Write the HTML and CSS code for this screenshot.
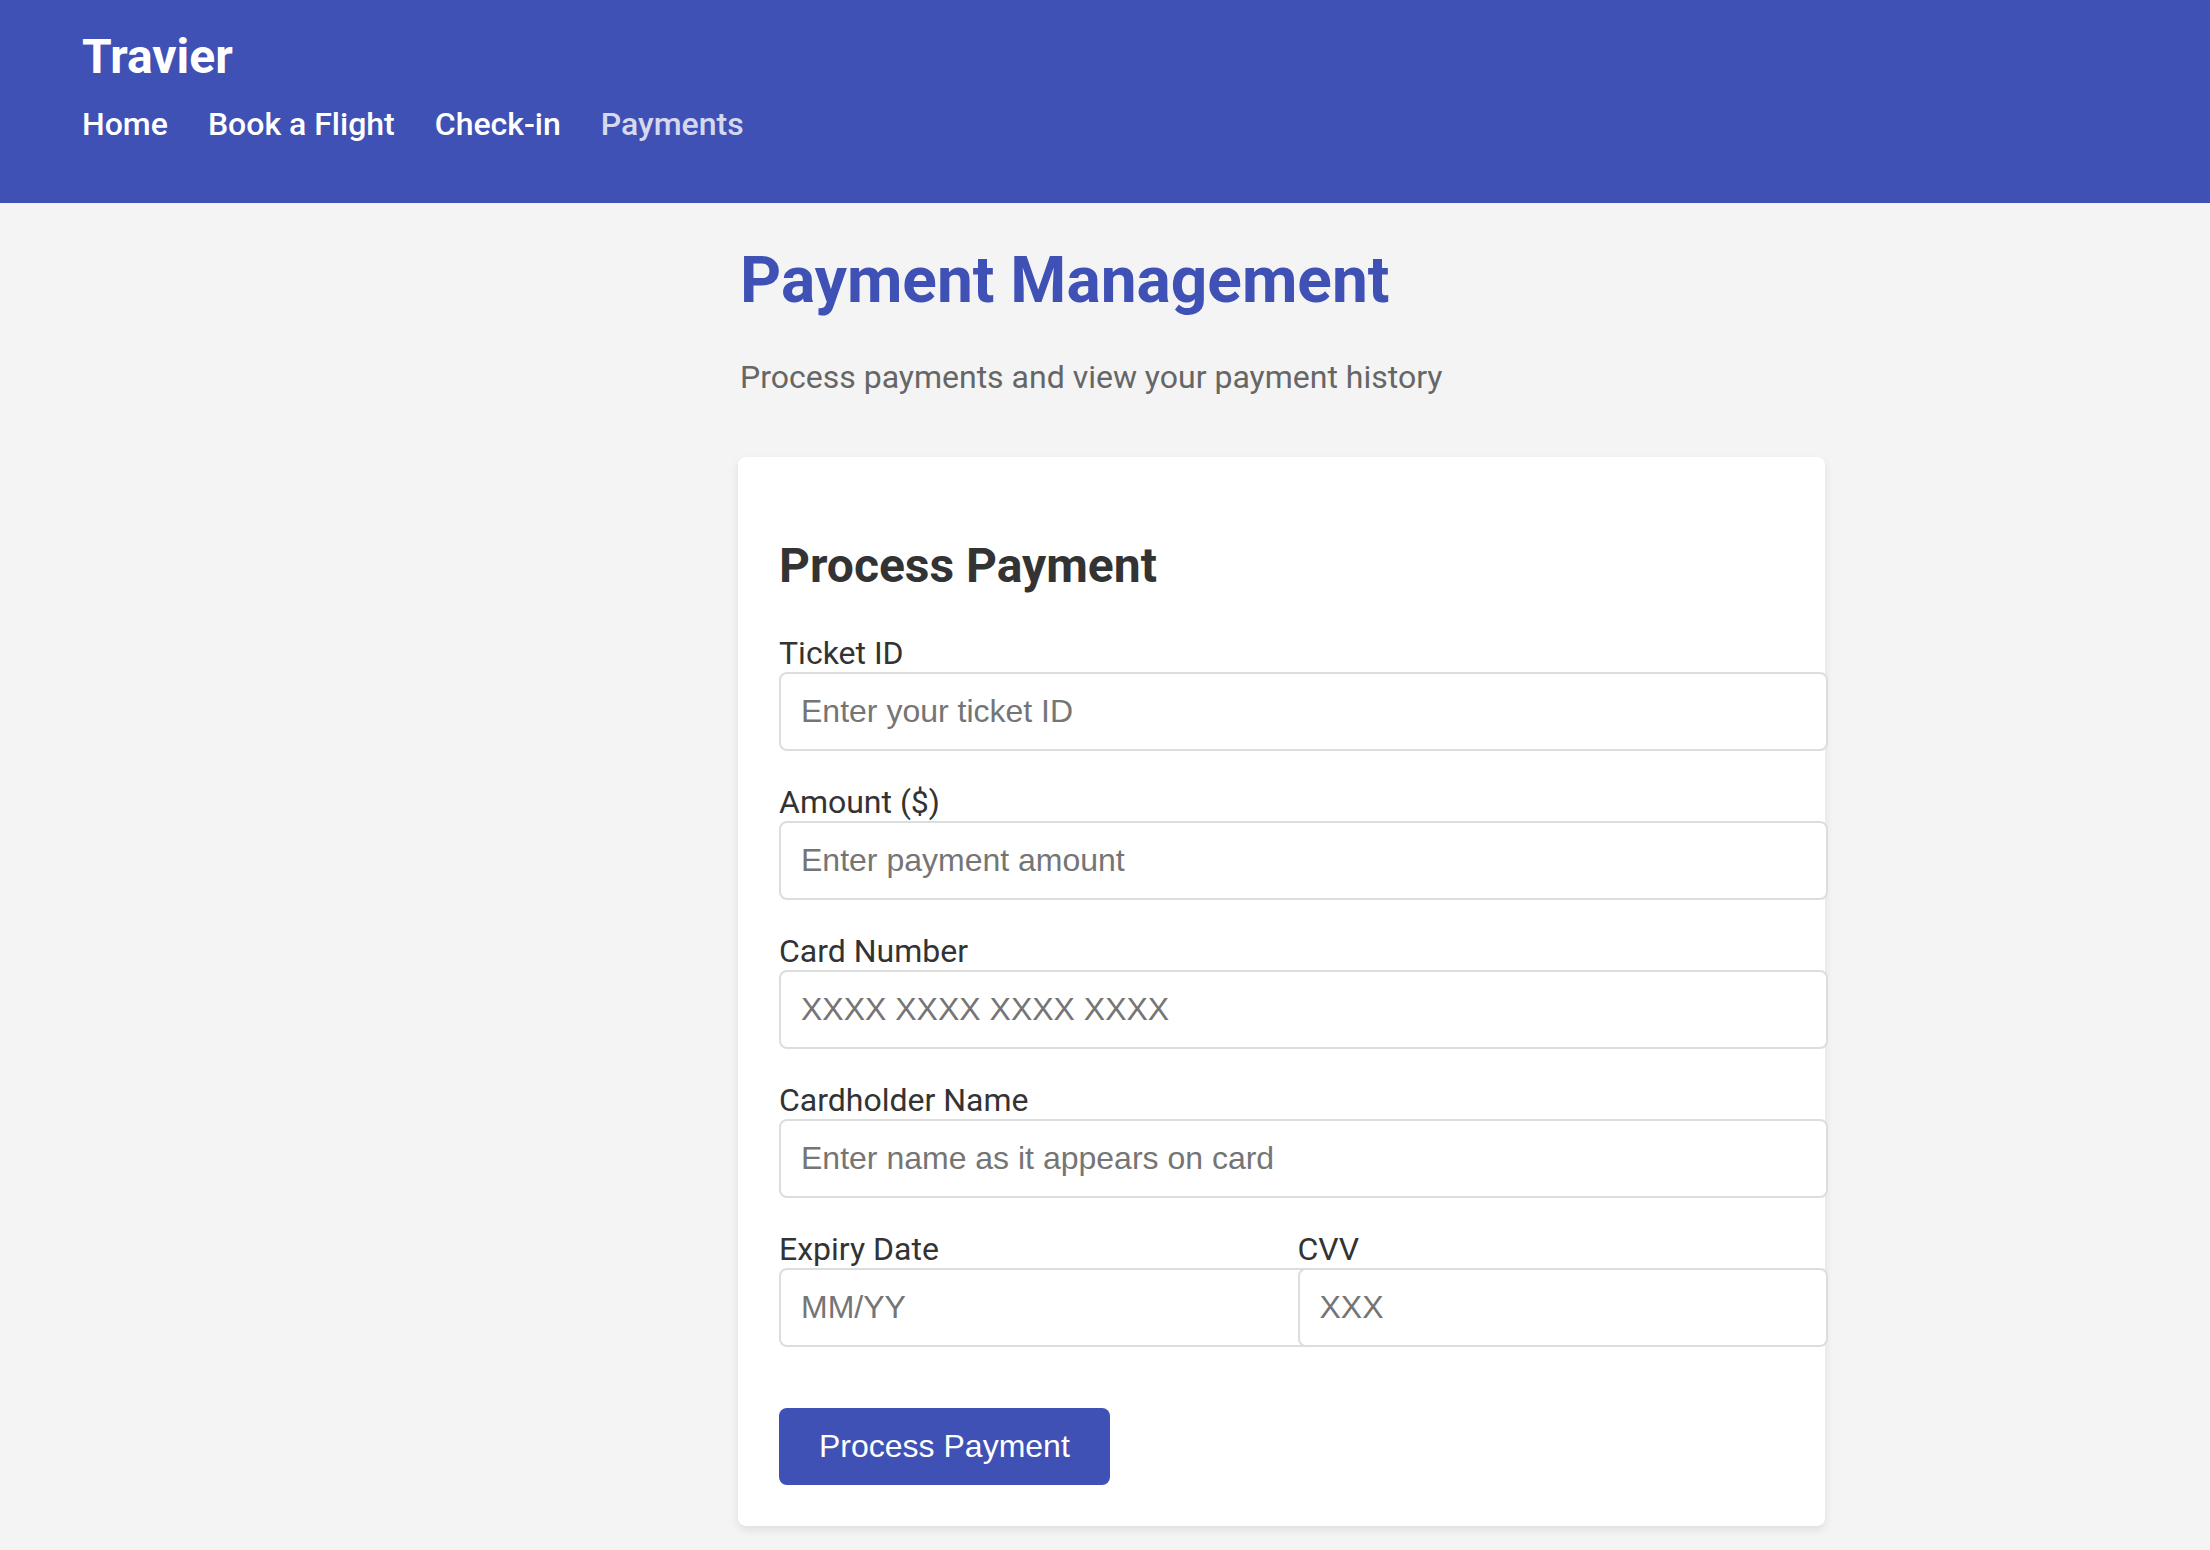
FILE: index.html
```html
<!DOCTYPE html>
<html lang="en">
<head>
<meta charset="utf-8">
<title>Travier - Payments</title>
<link rel="stylesheet" href="styles.css">
</head>
<body>
<header class="site-header">
  <div class="brand">Travier</div>
  <nav class="nav">
    <a class="nav-link" href="#">Home</a>
    <a class="nav-link" href="#">Book a Flight</a>
    <a class="nav-link" href="#">Check-in</a>
    <a class="nav-link active" href="#">Payments</a>
  </nav>
</header>
<main class="main">
  <h1 class="page-title">Payment Management</h1>
  <p class="page-subtitle">Process payments and view your payment history</p>
  <section class="card">
    <h2 class="card-title">Process Payment</h2>
    <form class="form">
      <div class="form-group">
        <label class="label">Ticket ID</label>
        <input class="input" type="text" placeholder="Enter your ticket ID">
      </div>
      <div class="form-group">
        <label class="label">Amount ($)</label>
        <input class="input" type="text" placeholder="Enter payment amount">
      </div>
      <div class="form-group">
        <label class="label">Card Number</label>
        <input class="input" type="text" placeholder="XXXX XXXX XXXX XXXX">
      </div>
      <div class="form-group">
        <label class="label">Cardholder Name</label>
        <input class="input" type="text" placeholder="Enter name as it appears on card">
      </div>
      <div class="form-row">
        <div class="form-group grow">
          <label class="label">Expiry Date</label>
          <input class="input" type="text" placeholder="MM/YY">
        </div>
        <div class="form-group grow">
          <label class="label">CVV</label>
          <input class="input" type="text" placeholder="XXX">
        </div>
      </div>
      <button class="btn" type="button">Process Payment</button>
    </form>
  </section>
</main>
</body>
</html>
```

FILE: styles.css
```css
* { box-sizing: content-box; }
html, body {
  margin: 0;
  padding: 0;
}
body {
  background: #f4f4f4;
  font-family: Roboto, "Noto Sans", sans-serif;
  color: #333;
  min-height: 1550px;
}
.site-header {
  background: #3f51b5;
  color: #fff;
  padding: 28px 82px 0;
  height: 175px;
}
.brand {
  font-size: 48px;
  font-weight: 700;
  line-height: normal;
  margin-bottom: 20px;
}
.nav {
  display: flex;
  gap: 40px;
}
.nav-link {
  color: #fff;
  text-decoration: none;
  font-size: 32px;
  font-weight: 500;
  line-height: normal;
}
.nav-link.active {
  color: rgba(255, 255, 255, 0.8);
}
.main {
  padding-left: 738px;
  width: 1087px;
}
.page-title {
  margin: 40px 0 0;
  font-size: 64px;
  font-weight: 700;
  line-height: normal;
  color: #3f51b5;
  padding-left: 2px;
}
.page-subtitle {
  margin: 40px 0 61px;
  font-size: 32px;
  line-height: normal;
  color: #666;
  padding-left: 2px;
}
.card {
  background: #fff;
  border-radius: 8px;
  box-shadow: 0 4px 10px rgba(0, 0, 0, 0.09);
  padding: 41px 41px 41px;
  width: 1005px;
}
.card-title {
  margin: 39px 0 40px;
  font-size: 48px;
  font-weight: 700;
  line-height: normal;
  color: #333;
}
.form { margin: 0; }
.form-group {
  margin-bottom: 32px;
}
.label {
  display: block;
  font-size: 32px;
  line-height: normal;
  color: #333;
  margin-bottom: 0;
}
.input {
  display: block;
  width: 100%;
  padding: 19px 20px;
  border: 2px solid #ddd;
  border-radius: 8px;
  font-family: "Liberation Sans", Arial, sans-serif;
  font-size: 32px;
  line-height: normal;
  background: #fff;
  color: #333;
  margin: 0;
}
.input::placeholder {
  color: #757575;
}
.form-row {
  display: flex;
  gap: 32px;
}
.grow {
  flex: 1 1 0;
  min-width: 0;
}
.btn {
  display: block;
  margin-top: 29px;
  padding: 20px 40px;
  border: none;
  border-radius: 8px;
  background: #3f51b5;
  color: #fff;
  font-family: "Liberation Sans", Arial, sans-serif;
  font-size: 32px;
  line-height: normal;
  cursor: pointer;
}
```
